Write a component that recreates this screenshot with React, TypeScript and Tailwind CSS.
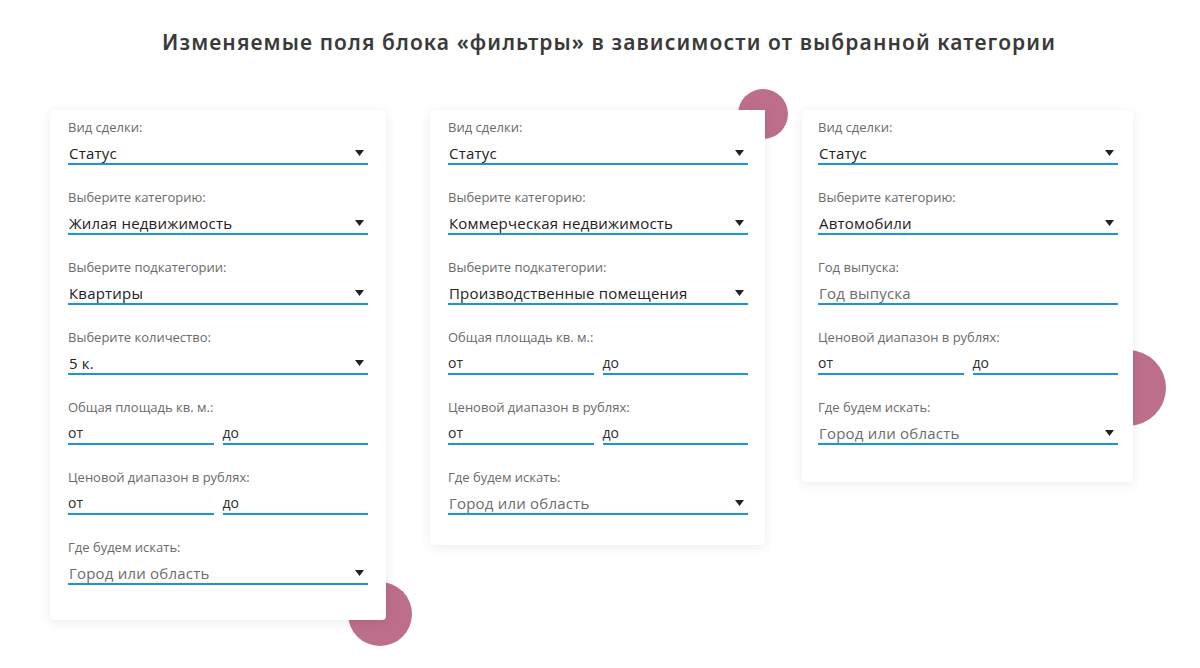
type Field =
  | { kind: "select"; label: string; value: string; muted?: boolean }
  | { kind: "input"; label: string; value: string }
  | { kind: "range"; label: string };

const cards: { fields: Field[]; width: string; pad: string; corner: string; circle: string }[] = [
  {
    width: "w-[336px] pl-[18px] pr-[18px]",
    pad: "pb-[35px]",
    corner: "rounded-[4px]",
    circle: "left-[298px] top-[472px] h-[64px] w-[64px]",
    fields: [
      { kind: "select", label: "Вид сделки:", value: "Статус" },
      { kind: "select", label: "Выберите категорию:", value: "Жилая недвижимость" },
      { kind: "select", label: "Выберите подкатегории:", value: "Квартиры" },
      { kind: "select", label: "Выберите количество:", value: "5 к." },
      { kind: "range", label: "Общая площадь кв. м.:" },
      { kind: "range", label: "Ценовой диапазон в рублях:" },
      { kind: "select", label: "Где будем искать:", value: "Город или область", muted: true },
    ],
  },
  {
    width: "w-[335px] pl-[18px] pr-[17px]",
    pad: "pb-[30px]",
    corner: "rounded-[4px] rounded-tr-none",
    circle: "left-[308px] -top-[21px] h-[50px] w-[50px]",
    fields: [
      { kind: "select", label: "Вид сделки:", value: "Статус" },
      { kind: "select", label: "Выберите категорию:", value: "Коммерческая недвижимость" },
      { kind: "select", label: "Выберите подкатегории:", value: "Производственные помещения" },
      { kind: "range", label: "Общая площадь кв. м.:" },
      { kind: "range", label: "Ценовой диапазон в рублях:" },
      { kind: "select", label: "Где будем искать:", value: "Город или область", muted: true },
    ],
  },
  {
    width: "w-[331px] pl-[16px] pr-[15px]",
    pad: "pb-[37px]",
    corner: "rounded-[4px]",
    circle: "left-[288px] top-[240px] h-[76px] w-[76px]",
    fields: [
      { kind: "select", label: "Вид сделки:", value: "Статус" },
      { kind: "select", label: "Выберите категорию:", value: "Автомобили" },
      { kind: "input", label: "Год выпуска:", value: "Год выпуска" },
      { kind: "range", label: "Ценовой диапазон в рублях:" },
      { kind: "select", label: "Где будем искать:", value: "Город или область", muted: true },
    ],
  },
];

function Caret() {
  return (
    <svg className="mr-[4px] h-[6px] w-[9px] shrink-0" viewBox="0 0 9 6" aria-hidden="true">
      <polygon points="0,0 9,0 4.5,6" fill="#1f2326" />
    </svg>
  );
}

function FieldRow({ field, last }: { field: Field; last: boolean }) {
  return (
    <div className={last ? "" : "mb-6"}>
      <div className="h-[17px] text-[13px] leading-[17px] text-[#6a6a6a]">{field.label}</div>
      {field.kind === "range" ? (
        <div className="mt-[7px] grid grid-cols-2 gap-[9px]">
          <div className="h-[22px] border-b-2 border-[#1a95da] text-[14px] leading-5 text-[#2e2e2e]">от</div>
          <div className="h-[22px] border-b-2 border-[#1a95da] text-[14px] leading-5 text-[#2e2e2e]">до</div>
        </div>
      ) : (
        <div className="mt-[7px] flex h-[22px] items-center justify-between border-b-2 border-[#1a95da] pl-px">
          <span
            className={`text-[15px] leading-5 tracking-[0.2px] ${
              field.kind === "input" || (field.kind === "select" && field.muted) ? "text-[#6c6c6c]" : "text-[#222]"
            }`}
          >
            {field.value}
          </span>
          {field.kind === "select" && <Caret />}
        </div>
      )}
    </div>
  );
}

export default function App() {
  return (
    <div className="h-[668px] w-[1200px] overflow-hidden bg-white font-['Open_Sans',sans-serif]">
      <h1 className="mt-[28px] h-[28px] pl-[18px] text-center font-['Noto_Sans',sans-serif] text-[21px] font-semibold leading-[28px] tracking-[1.1px] text-[#3a3a3a]">
        Изменяемые поля блока «фильтры» в зависимости от выбранной категории
      </h1>

      <div className="mt-[54px] flex items-start pl-[50px]">
        {cards.map((card, i) => (
          <div key={i} className={`relative ${i === 1 ? "ml-[44px]" : i === 2 ? "ml-[37px]" : ""}`}>
            <div className={`absolute rounded-full bg-[#bd6e8b] ${card.circle}`} />
            <div
              className={`relative bg-white pt-[9px] shadow-[0_2px_12px_rgba(0,0,0,0.08)] ${card.width} ${card.pad} ${card.corner}`}
            >
              {card.fields.map((f, j) => (
                <FieldRow key={j} field={f} last={j === card.fields.length - 1} />
              ))}
            </div>
          </div>
        ))}
      </div>
    </div>
  );
}
